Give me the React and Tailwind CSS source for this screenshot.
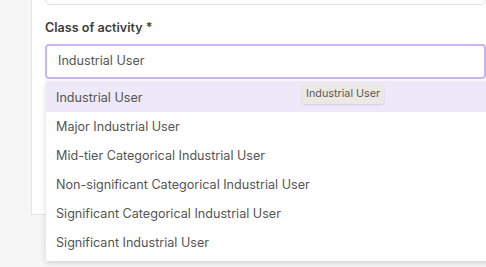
import React from "react";

const options = [
  "Industrial User",
  "Major Industrial User",
  "Mid-tier Categorical Industrial User",
  "Non-significant Categorical Industrial User",
  "Significant Categorical Industrial User",
  "Significant Industrial User",
];

export default function App() {
  return (
    <div className="w-[486px] h-[267px] overflow-hidden bg-[#f6f6f6] font-['Inter',sans-serif]">
      <div className="ml-[31px] h-[245px] bg-white border-l border-b border-[#e4e4e4] pl-[13px]">
        {/* previous field, cut off above */}
        <div className="mt-[-30px] h-[35px] rounded-[5px] border border-[#e2e2e2]" />

        <div className="pt-[15px] text-[12.6px] font-semibold text-[#3d3d3d] leading-[16px]">
          Class of activity *
        </div>

        <div className="relative mt-[8px]">
          <div className="h-[35px] rounded-[4px] border-2 border-[#c8b6ef] flex items-center pl-[11px] text-[12.6px] text-[#555]">
            Industrial User
          </div>

          <div className="absolute left-[1px] top-[37px] w-[460px] bg-white shadow-[0_2px_6px_rgba(0,0,0,0.15)] pb-[4px] z-10">
            {options.map((opt, i) => (
              <div
                key={opt}
                className={
                  i === 0
                    ? "h-[31px] pt-[3px] pl-[10px] leading-[28px] text-[12.6px] text-[#555] bg-[#eee9f8]"
                    : "h-[29px] pl-[10px] leading-[29px] text-[12.6px] text-[#555]"
                }
              >
                {opt}
              </div>
            ))}
          </div>

          <div className="absolute left-[257px] top-[40px] z-20 h-[20px] px-[4px] rounded-[3px] bg-[#ece9e5] shadow-[0_1px_2px_rgba(0,0,0,0.12)] text-[10.8px] leading-[20px] text-[#5a5a5a]">
            Industrial User
          </div>
        </div>
      </div>
    </div>
  );
}
